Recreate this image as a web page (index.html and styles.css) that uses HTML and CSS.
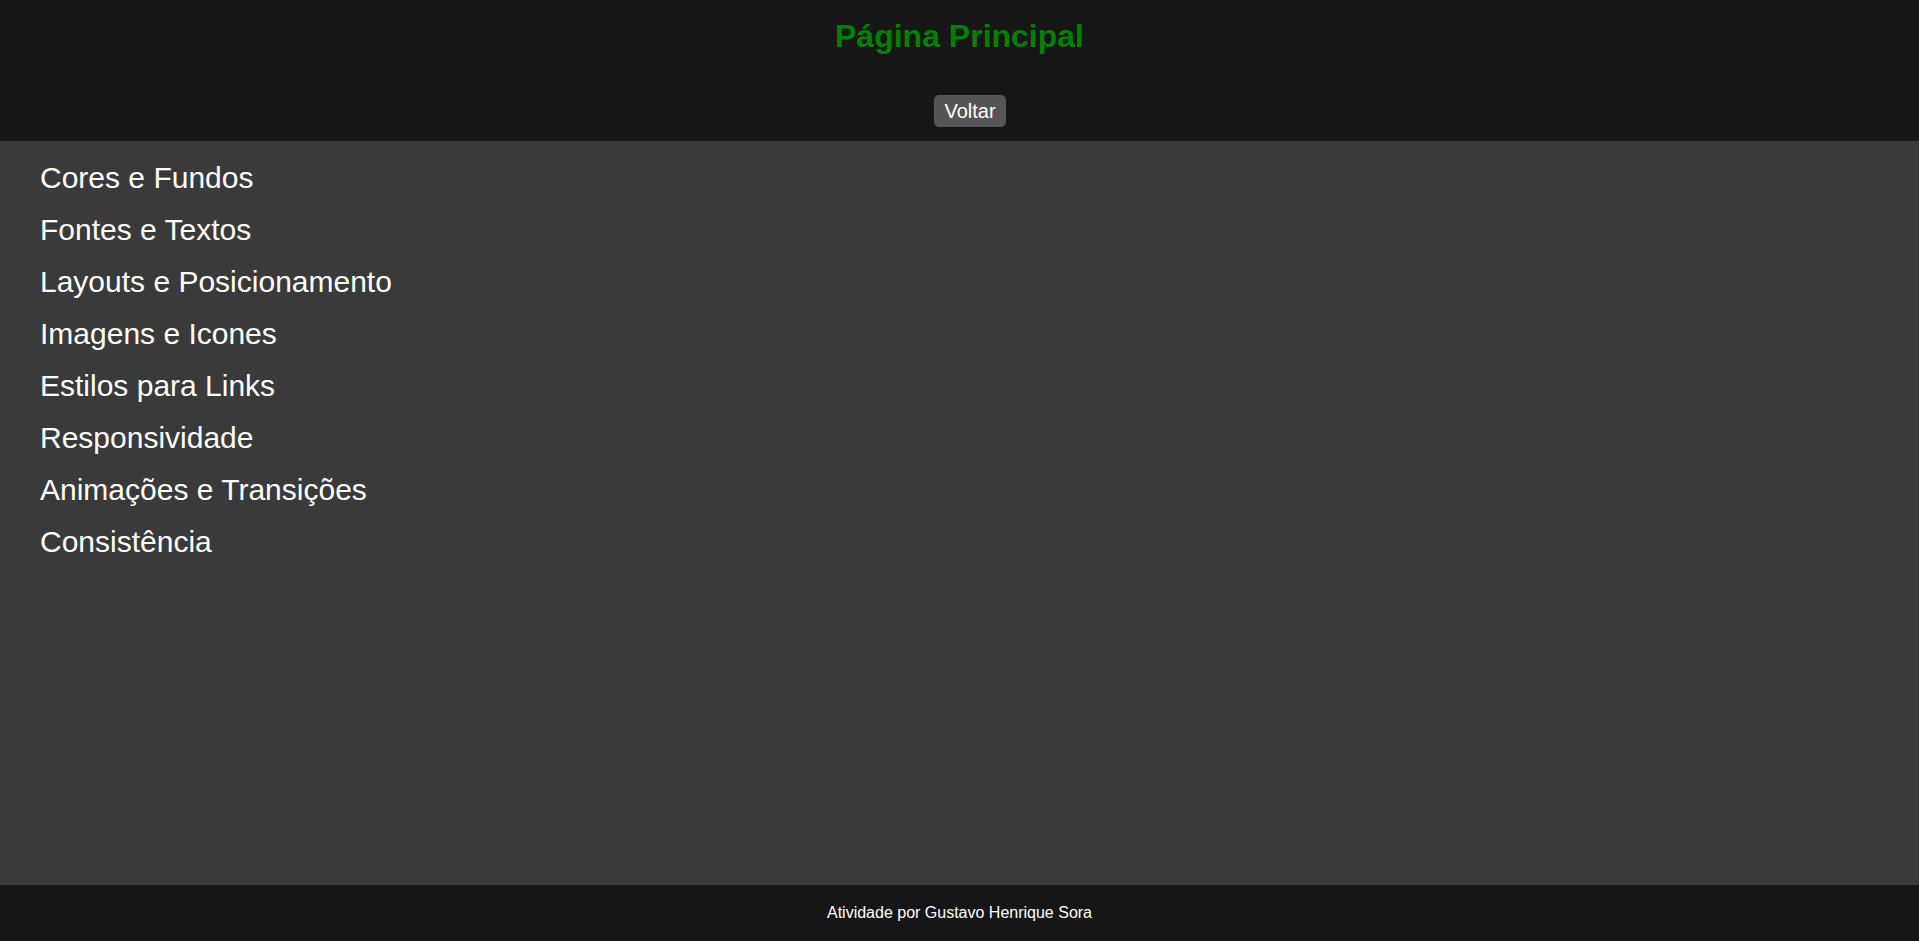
FILE: index.html
```html
<!DOCTYPE html>
<html lang="pt-BR">
<head>
<meta charset="utf-8">
<title>Página Principal</title>
<link rel="stylesheet" href="styles.css">
</head>
<body>
<div class="page">
  <header class="top">
    <h1 class="title">Página Principal</h1>
    <button class="back" type="button">Voltar</button>
  </header>
  <main class="content">
    <ul class="topics">
      <li><a href="#">Cores e Fundos</a></li>
      <li><a href="#">Fontes e Textos</a></li>
      <li><a href="#">Layouts e Posicionamento</a></li>
      <li><a href="#">Imagens e Icones</a></li>
      <li><a href="#">Estilos para Links</a></li>
      <li><a href="#">Responsividade</a></li>
      <li><a href="#">Animações e Transições</a></li>
      <li><a href="#">Consistência</a></li>
    </ul>
  </main>
  <footer class="foot">Atividade por Gustavo Henrique Sora</footer>
</div>
</body>
</html>
```

FILE: styles.css
```css
html, body {
  margin: 0;
  padding: 0;
  height: 100%;
}
body {
  font-family: "Liberation Sans", Arial, sans-serif;
  background: #3a3a3a;
  color: #fff;
}
.page {
  min-height: 100vh;
  display: flex;
  flex-direction: column;
}
.top {
  background: #161616;
  height: 141px;
  box-sizing: border-box;
  display: flex;
  flex-direction: column;
  align-items: center;
  padding-top: 18px;
}
.title {
  margin: 0;
  font-size: 32px;
  font-weight: bold;
  color: #008000;
  line-height: 37px;
}
.back {
  margin-top: 40px;
  margin-left: 21px;
  background: #555;
  color: #fff;
  border: none;
  border-radius: 5px;
  font-family: "Liberation Sans", Arial, sans-serif;
  font-size: 20px;
  height: 32px;
  padding: 0 10px;
  line-height: 32px;
}
.content {
  flex: 1;
  background: #3a3a3a;
  padding-top: 11px;
}
.topics {
  list-style: none;
  margin: 0;
  padding: 0 0 0 40px;
}
.topics li {
  line-height: 52px;
  font-size: 30px;
}
.topics a {
  color: #fff;
  text-decoration: none;
}
.foot {
  background: #161616;
  height: 56px;
  display: flex;
  align-items: center;
  justify-content: center;
  font-size: 16px;
  color: #fff;
}
```
